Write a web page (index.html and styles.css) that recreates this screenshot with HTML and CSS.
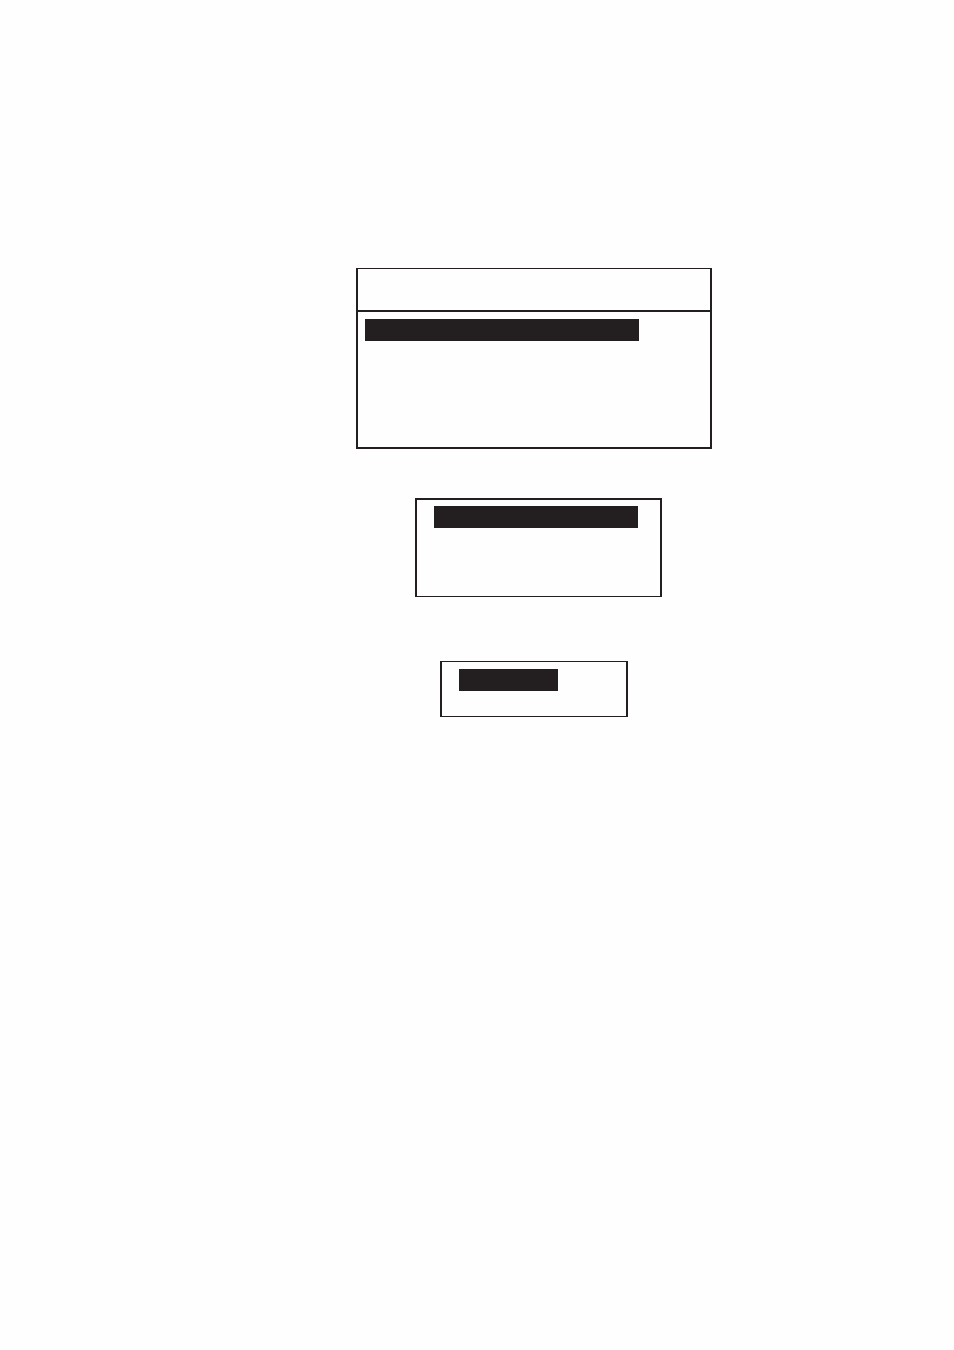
FILE: index.html
```html
<!DOCTYPE html>
<html lang="en">
<head>
<meta charset="utf-8">
<meta name="viewport" content="width=device-width, initial-scale=1">
<title>Menus</title>
<link rel="stylesheet" href="styles.css">
</head>
<body>
<main class="page">
  <div class="menus">
    <section class="panel panel-main">
      <div class="panel-header"></div>
      <div class="panel-body">
        <div class="selection"></div>
      </div>
    </section>
    <section class="panel panel-sub">
      <div class="selection"></div>
    </section>
    <section class="panel panel-option">
      <div class="selection"></div>
    </section>
  </div>
</main>
</body>
</html>
```
FILE: styles.css
```css
:root {
  --ink: #231f20;
  --paper: #fefefe;
}

* {
  box-sizing: border-box;
}

body {
  margin: 0;
  background: var(--paper);
  color: var(--ink);
  font-family: "Liberation Sans", sans-serif;
}

.page {
  display: grid;
  grid-template-columns: 356fr 356fr 242fr;
  min-height: 100vh;
  padding-top: 268px;
}

.menus {
  grid-column: 2;
  display: flex;
  flex-direction: column;
}

.panel {
  border: 1px solid var(--ink);
  border-left-width: 2px;
  border-right-width: 2px;
}

.selection {
  min-height: 22px;
  background: var(--ink);
}

.panel-main {
  border-bottom-width: 2px;
}

.panel-header {
  min-height: 43px;
  border-bottom: 2px solid var(--ink);
}

/* The highlighted row leaves the rest of its line empty. */
.panel-body {
  display: grid;
  grid-template-columns: 274fr 64fr;
  padding: 7px 7px 106px;
}

.panel-sub {
  margin: 49px 50px 0 59px;
  padding: 6px 22px 68px 17px;
  border-top-width: 2px;
}

.panel-option {
  display: grid;
  grid-template-columns: 99fr 68fr;
  margin: 64px 84px 0;
  padding: 7px 0 25px 17px;
}
```
